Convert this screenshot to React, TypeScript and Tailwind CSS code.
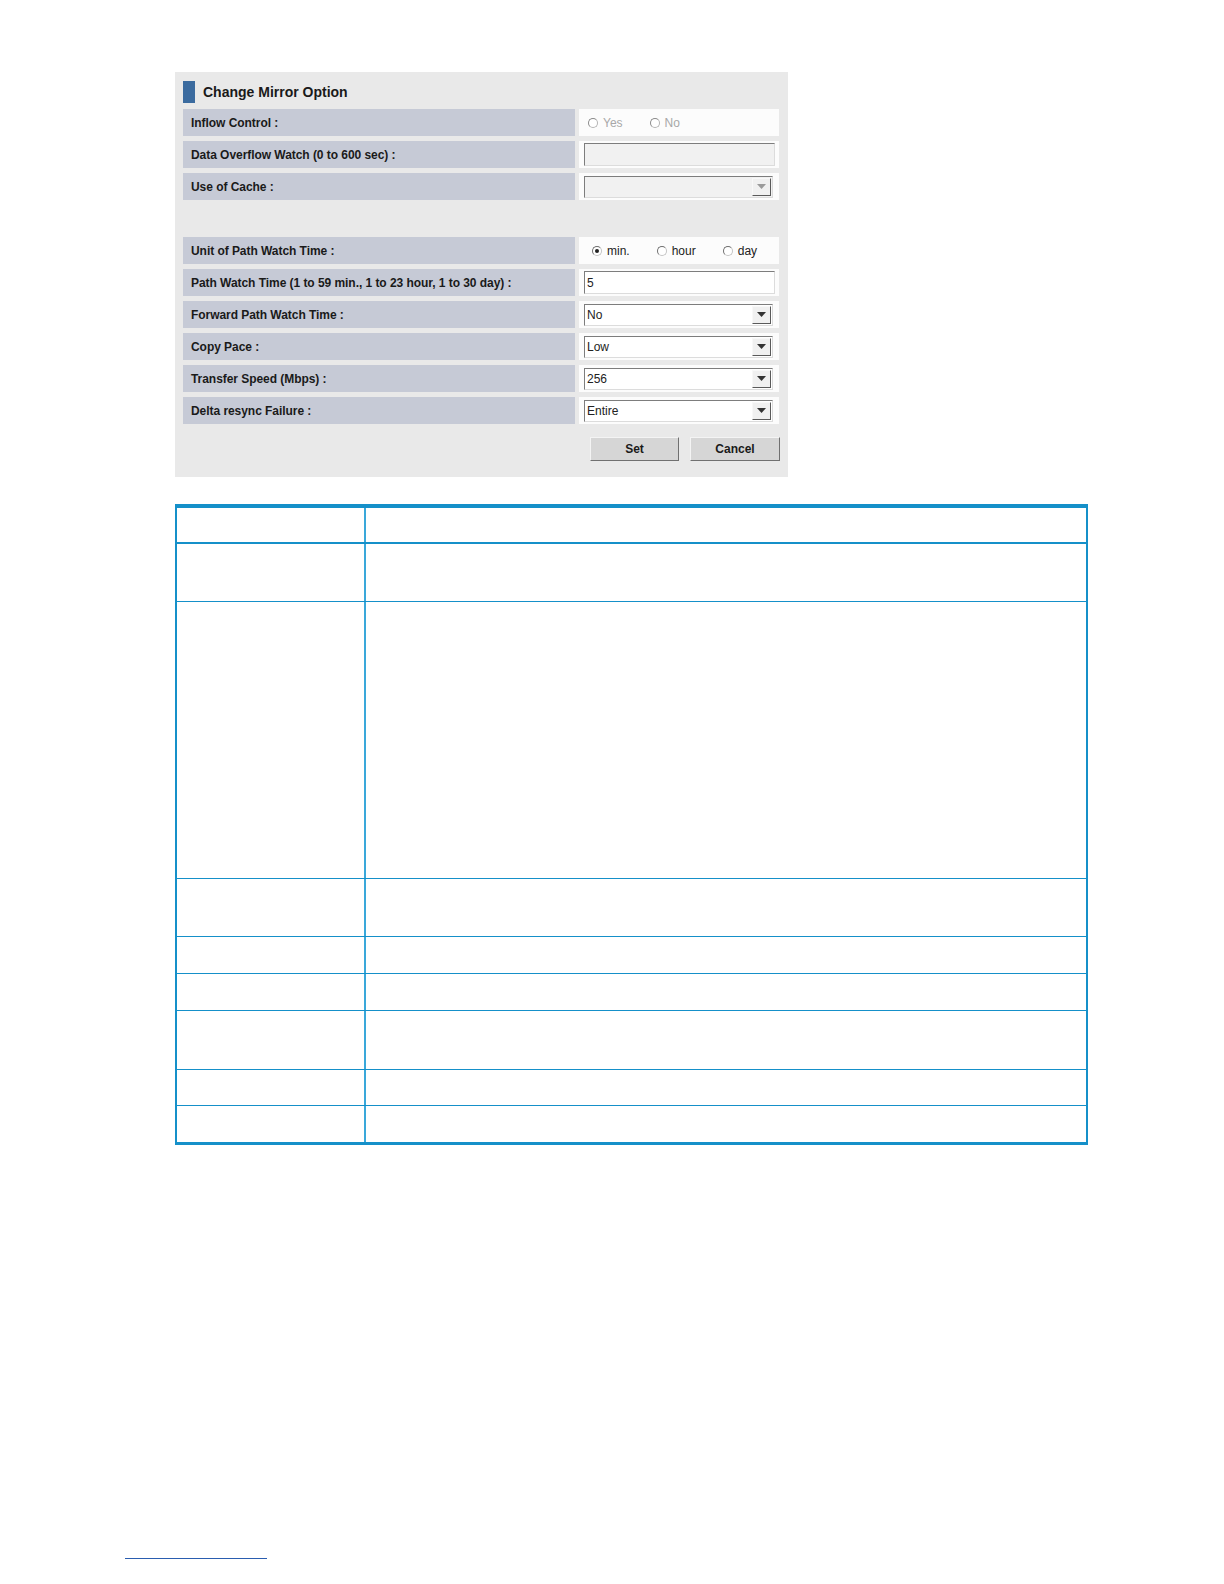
import React from "react";

const font = { fontFamily: '"Liberation Sans", Arial, sans-serif' };

function Radio({ checked, disabled, label, gap }: { checked?: boolean; disabled?: boolean; label: string; gap: string }) {
  return (
    <div className={`flex items-center ${gap}`}>
      <span
        className={`w-[10px] h-[10px] rounded-full border flex items-center justify-center bg-white ${
          disabled ? "border-[#b4b4b4] border-l-[#8a8a8a] border-t-[#8a8a8a]" : "border-[#c4c4c4] border-l-[#6e6e6e] border-t-[#6e6e6e]"
        }`}
      >
        {checked && <span className="w-[4px] h-[4px] rounded-full bg-[#222]" />}
      </span>
      <span className={`ml-[5px] text-[12px] ${disabled ? "text-[#a8a8a8]" : "text-[#222]"}`}>{label}</span>
    </div>
  );
}

function TextBox({ value, disabled }: { value?: string; disabled?: boolean }) {
  return (
    <div
      className={`w-[191px] h-[23px] border border-t-[#7d7d7d] border-l-[#7d7d7d] border-b-[#dcdcdc] border-r-[#dcdcdc] flex items-center px-[2px] text-[12px] text-[#222] ${
        disabled ? "bg-[#f1f1f1]" : "bg-white"
      }`}
    >
      {value}
    </div>
  );
}

function Select({ value, disabled }: { value?: string; disabled?: boolean }) {
  return (
    <div
      className={`w-[189px] h-[22px] border border-t-[#7d7d7d] border-l-[#7d7d7d] border-b-[#dcdcdc] border-r-[#dcdcdc] flex items-center text-[12px] text-[#222] ${
        disabled ? "bg-[#f1f1f1]" : "bg-white"
      }`}
    >
      <span className="flex-1 pl-[2px]">{value}</span>
      <span className="w-[19px] h-[18px] mr-[1px] bg-[#f0f0f0] border border-t-[#f8f8f8] border-l-[#f8f8f8] border-b-[#5a5a5a] border-r-[#5a5a5a] flex items-center justify-center">
        <svg width="9" height="5" viewBox="0 0 9 5">
          <path d="M0 0h9L4.5 5z" fill={disabled ? "#9a9a9a" : "#333"} />
        </svg>
      </span>
    </div>
  );
}

function Row({ label, children }: { label: string; children: React.ReactNode }) {
  return (
    <div className="flex h-[27px] gap-[4px]">
      <div className="w-[392px] bg-[#c6cad6] flex items-center pl-[8px] text-[12px] font-bold text-[#1a1a1a] tracking-[-0.05px] whitespace-nowrap">
        {label}
      </div>
      <div className="w-[200px] bg-[#fcfcfc] flex items-center pl-[5px]">{children}</div>
    </div>
  );
}

const tableRows = [58, 277, 58, 37, 37, 59, 36, 36];

export default function App() {
  return (
    <div className="w-full h-screen overflow-hidden bg-white relative" style={font}>
      <div className="pt-[72px] pl-[175px]">
        {/* Screenshot panel */}
        <div className="w-[613px] h-[405px] bg-[#e9e9e9] pl-[8px] pt-[9px]">
          <div className="flex items-center h-[22px] mb-[6px]">
            <span className="w-[12px] h-[22px] bg-[#3b6b9f]" />
            <span className="ml-[8px] text-[14px] font-bold text-[#1a1a1a]">Change Mirror Option</span>
          </div>
          <div className="flex flex-col gap-[5px]">
            <Row label="Inflow Control :">
              <div className="flex items-center pl-[4px]">
                <Radio disabled label="Yes" gap="mr-[27px]" />
                <Radio disabled label="No" gap="" />
              </div>
            </Row>
            <Row label="Data Overflow Watch (0 to 600 sec) :">
              <TextBox disabled />
            </Row>
            <Row label="Use of Cache :">
              <Select disabled />
            </Row>
          </div>
          <div className="h-[37px]" />
          <div className="flex flex-col gap-[5px]">
            <Row label="Unit of Path Watch Time :">
              <div className="flex items-center pl-[8px]">
                <Radio checked label="min." gap="mr-[27px]" />
                <Radio label="hour" gap="mr-[27px]" />
                <Radio label="day" gap="" />
              </div>
            </Row>
            <Row label="Path Watch Time (1 to 59 min., 1 to 23 hour, 1 to 30 day) :">
              <TextBox value="5" />
            </Row>
            <Row label="Forward Path Watch Time :">
              <Select value="No" />
            </Row>
            <Row label="Copy Pace :">
              <Select value="Low" />
            </Row>
            <Row label="Transfer Speed (Mbps) :">
              <Select value="256" />
            </Row>
            <Row label="Delta resync Failure :">
              <Select value="Entire" />
            </Row>
          </div>
          <div className="flex justify-end gap-[11px] mt-[13px] w-[597px]">
            <button className="w-[89px] h-[24px] bg-[#d6d6d6] border border-t-[#f4f4f4] border-l-[#f4f4f4] border-b-[#707070] border-r-[#707070] text-[12px] font-bold text-[#1a1a1a]">
              Set
            </button>
            <button className="w-[90px] h-[24px] bg-[#d6d6d6] border border-t-[#f4f4f4] border-l-[#f4f4f4] border-b-[#707070] border-r-[#707070] text-[12px] font-bold text-[#1a1a1a]">
              Cancel
            </button>
          </div>
        </div>

        {/* Empty parameter table */}
        <div className="mt-[27px] w-[913px] border-t-[4px] border-b-[3px] border-x-[2px] border-[#1590c9]">
          <div className="flex h-[36px] border-b-[2px] border-[#1590c9]">
            <div className="w-[189px] border-r-[2px] border-[#3aa8da]" />
            <div className="flex-1" />
          </div>
          {tableRows.map((h, i) => (
            <div
              key={i}
              className={`flex ${i < tableRows.length - 1 ? "border-b border-[#1590c9]" : ""}`}
              style={{ height: h }}
            >
              <div className="w-[189px] border-r-[2px] border-[#3aa8da]" />
              <div className="flex-1" />
            </div>
          ))}
        </div>
      </div>
      <div className="absolute left-[125px] top-[1558px] w-[142px] h-[1px] bg-[#2a5db0]" />
    </div>
  );
}
